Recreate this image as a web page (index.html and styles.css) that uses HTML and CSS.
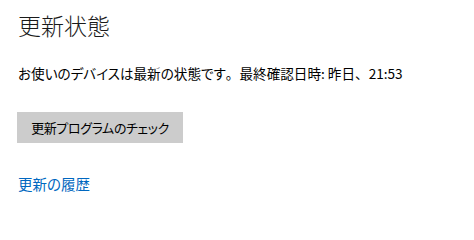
FILE: index.html
```html
<!DOCTYPE html>
<html lang="ja">
<head>
<meta charset="utf-8">
<link rel="stylesheet" href="styles.css">
</head>
<body>
<main class="page">
  <h1 class="title">更新状態</h1>
  <p class="status">お使いのデバイスは最新の状態です<span class="punct">。</span>最終確認日時: 昨日<span class="punct">、</span>21:53</p>
  <button class="check">更新プログラムのチェック</button>
  <a class="history" href="#">更新の履歴</a>
</main>
</body>
</html>
```
FILE: styles.css
```css
html, body {
  margin: 0;
  padding: 0;
  background: #ffffff;
}
.page {
  font-family: "Noto Sans CJK JP", "Noto Sans", sans-serif;
  font-feature-settings: "palt";
  color: #000000;
  padding: 9px 18px 0 18px;
  display: flex;
  flex-direction: column;
  align-items: flex-start;
}
.title {
  margin: 0;
  font-size: 23px;
  font-weight: 300;
  line-height: 32px;
  color: #1a1a1a;
}
.status {
  margin: 22px 0 0 0;
  font-size: 13.6px;
  line-height: 20px;
}
.punct {
  font-feature-settings: normal;
}
.check {
  margin-top: 29px;
  margin-left: -1px;
  width: 166px;
  height: 31px;
  border: none;
  background: #cccccc;
  font-family: inherit;
  font-feature-settings: "palt";
  font-size: 13px;
  letter-spacing: -0.4px;
  color: #000;
  padding: 0;
}
.history {
  margin-top: 31px;
  font-size: 14.5px;
  line-height: 20px;
  color: #0067c0;
  text-decoration: none;
}
```
